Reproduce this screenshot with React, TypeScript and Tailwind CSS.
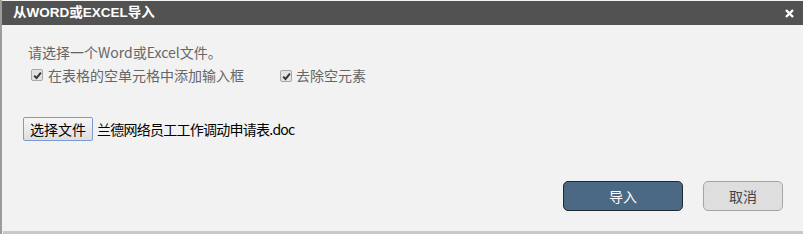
import React from "react";

function Check() {
  return (
    <span className="inline-flex items-center justify-center w-[12px] h-[12px] rounded-[2px] border border-[#a8a8a8] bg-[#e2e2e2]">
      <svg width="9" height="9" viewBox="0 0 9 9">
        <path d="M1.2 4.6 L3.5 7 L7.9 1.6" fill="none" stroke="#333" strokeWidth="1.9" />
      </svg>
    </span>
  );
}

export default function App() {
  const font = { fontFamily: '"Noto Sans CJK SC", "Liberation Sans", sans-serif' };
  return (
    <div
      className="w-[803px] h-[234px] bg-[#f2f2f2] flex flex-col border-l-2 border-[#9c9c9c] overflow-hidden"
      style={font}
    >
      <div className="mt-[1px] h-[24px] bg-[#525252] flex items-center justify-between pl-[11px] pr-[9px] shrink-0">
        <span
          className="text-white font-bold text-[13.5px] leading-none"
          style={{ fontFamily: '"Liberation Sans", "Noto Sans CJK SC", sans-serif' }}
        >
          从WORD或EXCEL导入
        </span>
        <svg width="9" height="9" viewBox="0 0 9 9">
          <path d="M1 1 L8 8 M8 1 L1 8" stroke="#fff" strokeWidth="2.4" />
        </svg>
      </div>
      <div className="flex-1 flex flex-col pl-[26px] pt-[17px]">
        <div className="h-[20px] text-[14px] leading-[20px] text-[#666]">请选择一个Word或Excel文件。</div>
        <div className="mt-[3px] h-[20px] flex items-center text-[14px] text-[#666] pl-[3px]">
          <Check />
          <span className="ml-[5px]">在表格的空单元格中添加输入框</span>
          <span className="ml-[36px]"><Check /></span>
          <span className="ml-[4px]">去除空元素</span>
        </div>
        <div className="mt-[32px] flex items-center -ml-[5px]">
          <button className="h-[24px] w-[70px] border border-[#7a9cd3] rounded-[2px] bg-gradient-to-b from-[#f6f6f6] to-[#dedede] text-[14px] text-black leading-none">
            选择文件
          </button>
          <span className="ml-[4px] text-[14px] tracking-[-0.75px] text-black">兰德网络员工工作调动申请表.doc</span>
        </div>
        <div className="mt-[40px] flex justify-end pr-[20px] gap-[20px]">
          <button className="w-[120px] h-[30px] rounded-[5px] border border-[#1f2a33] bg-[#4b6984] text-white text-[14px]">
            导入
          </button>
          <button className="w-[80px] h-[30px] rounded-[5px] border border-[#a6a6a6] bg-[#dedede] text-[#444] text-[14px]">
            取消
          </button>
        </div>
      </div>
      <div className="h-[3px] bg-[#c8c8c8] ml-[1px] shrink-0" />
    </div>
  );
}
